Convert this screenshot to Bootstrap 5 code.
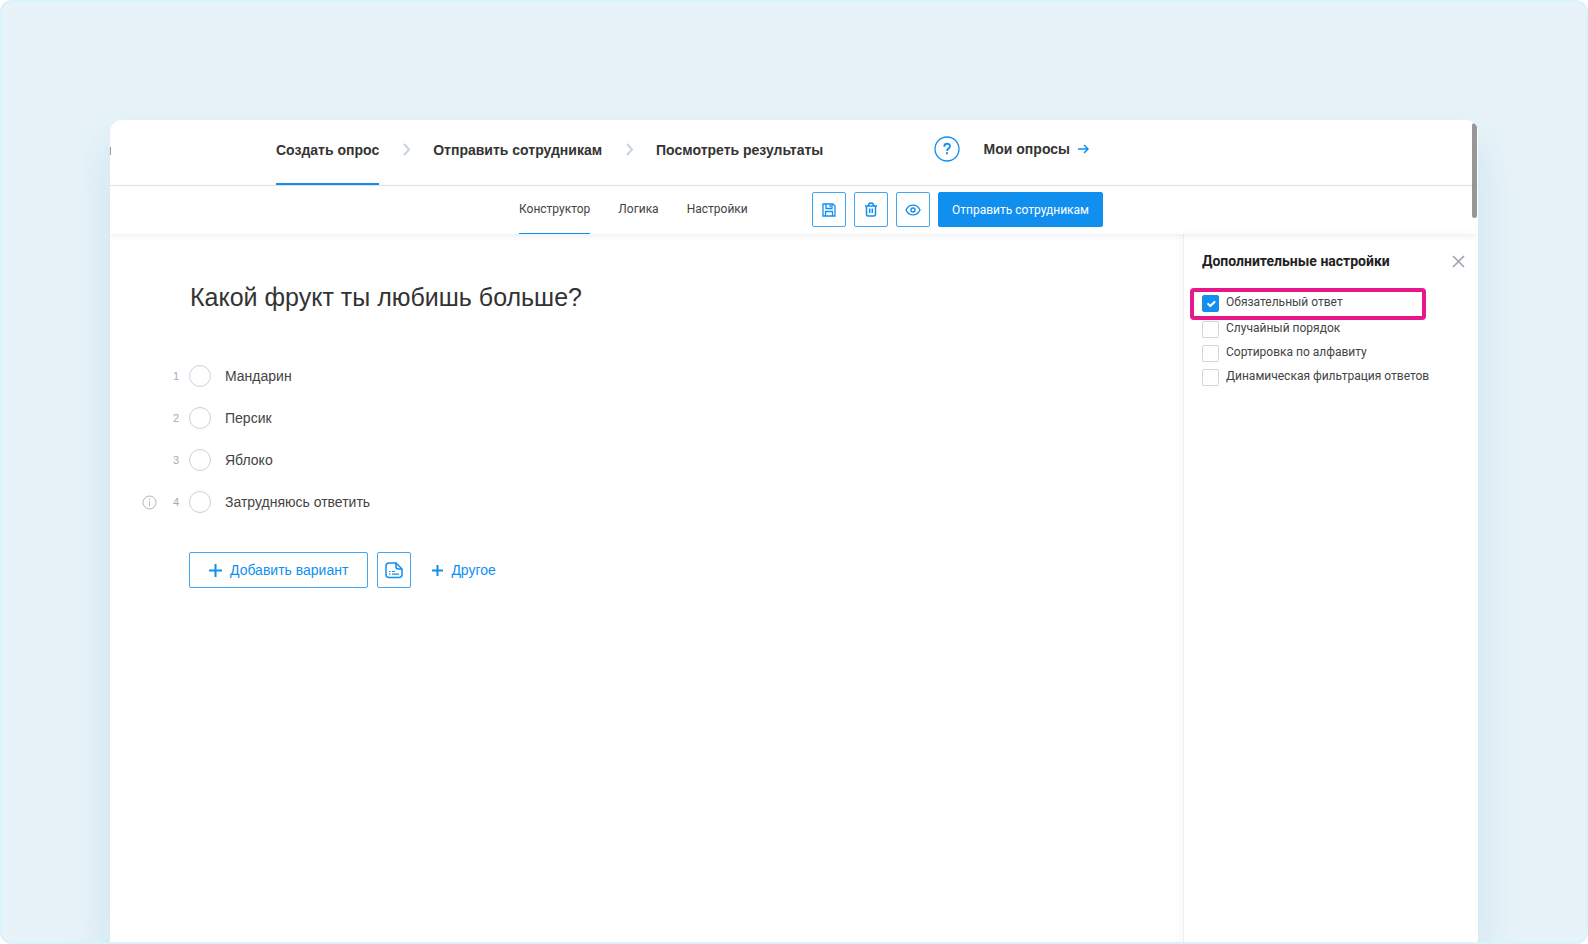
<!DOCTYPE html>
<html lang="ru">
<head>
<meta charset="utf-8">
<meta name="viewport" content="width=device-width, initial-scale=1">
<title>Конструктор опроса</title>
<link href="https://cdn.jsdelivr.net/npm/bootstrap@5.3.0/dist/css/bootstrap.min.css" rel="stylesheet">
<style>
:root { --accent: #118fef; --ink: #333; }
body { font-family: "Liberation Sans", Arial, sans-serif; font-size: 14px; line-height: 20px; color: var(--ink); background: #fff; }
a { text-decoration: none; color: inherit; }
svg { display: block; flex: none; }
.stage { border: 2px solid #daf2fa; border-radius: 12px; background: #e7f3f8; padding: 118px 108px 0; overflow: hidden; }
.app-window { background: #fff; border-radius: 12px 12px 0 0; box-shadow: 0 24px 44px rgba(90, 160, 205, .2); position: relative; overflow: hidden; }
.bar-inner { padding-left: 166px; padding-right: 375px; }
.steps-bar { height: 66px; border-bottom: 1px solid #e4e6e8; }
.step { font-weight: 700; height: 65px; padding-top: 20px; border-bottom: 2px solid transparent; }
.step.active { border-color: var(--accent); }
.chevron { margin: 23px 22px 0 24px; }
.help-zone { height: 58px; padding-right: 14px; }
.my-polls { font-weight: 700; }
.tools-bar { height: 48px; box-shadow: 0 2px 6px rgba(40, 50, 90, .08); position: relative; z-index: 1; }
.tabs { gap: 28px; margin-left: 243px; }
.tab { font-family: Roboto, sans-serif; font-size: 12px; color: #444; height: 48px; padding-top: 13px; border-bottom: 1px solid transparent; }
.tab.active { border-color: var(--accent); }
.tools { gap: 8px; padding-top: 6px; }
.btn-line { --bs-btn-color: var(--accent); --bs-btn-border-color: #44a6f3; --bs-btn-border-radius: 2px; --bs-btn-hover-color: #fff; --bs-btn-hover-bg: var(--accent); --bs-btn-font-size: 14px; --bs-btn-padding-y: 0; --bs-btn-padding-x: 19px; height: 36px; }
.btn-square { width: 34px; padding: 0; display: flex; align-items: center; justify-content: center; }
.tools .btn { height: 35px; }
.btn-send { --bs-btn-color: #fff; --bs-btn-bg: var(--accent); --bs-btn-border-color: var(--accent); --bs-btn-hover-color: #fff; --bs-btn-hover-bg: #0d7fd6; --bs-btn-border-radius: 2px; --bs-btn-font-size: 12px; --bs-btn-font-family: Roboto, sans-serif; --bs-btn-padding-y: 0; --bs-btn-padding-x: 13px; line-height: 20px; }
.work { min-height: 708px; }
.question { padding: 45px 24px 0 32px; }
.question h1 { font-size: 25px; line-height: 36px; font-weight: 400; margin: 0 0 50px 48px; }
.option-row { height: 22px; color: #444; }
.options { gap: 20px; }
.info-slot { width: 20px; }
.num { width: 27px; padding-right: 10px; text-align: right; font-size: 11px; color: #a4aaae; }
.option-row .form-check-input { width: 22px; height: 22px; margin: 0 14px 0 0; border: 1px solid #ccd1d3; flex: none; }
.actions { margin: 39px 0 0 47px; gap: 9px; }
.btn-other { --bs-btn-font-size: 14px; --bs-btn-color: var(--accent); border: 0; }
.side { width: 295px; border-left: 1px solid #eceef1; box-shadow: -4px 0 8px rgba(40, 50, 90, .03); padding: 17px 13px 0 18px; font-family: Roboto, sans-serif; font-size: 12px; }
.side h2 { font-size: 14px; line-height: 20px; font-weight: 700; color: #222; margin: 0; }
.btn-x { border: 0; background: none; padding: 0; color: #9aa3ad; }
.checks { margin-top: 17px; }
.check { height: 24px; padding: 0; }
.check .form-check-input { width: 17px; height: 17px; margin: 2px 7px 0 0; border: 1px solid #d0d7da; border-radius: 2px; flex: none; background-size: 14px; }
.check .form-check-input:checked { background-color: var(--accent); border-color: var(--accent); }
.check label { line-height: 18px; color: #444; }
.check.marked { height: 32px; width: 236px; border: 4px solid #e9168a; border-radius: 4px; padding: 1px 0 0 8px; margin: 0 0 -1px -12px; }
.thumb { position: absolute; z-index: 2; top: 3px; right: 1px; width: 5px; height: 95px; border-radius: 3px; background: #979797; }
.clip { position: absolute; left: 0; top: 27px; width: 1px; height: 8px; background: #999; }
</style>
</head>
<body>
<div class="stage">
  <div class="app-window">
    <span class="clip"></span><span class="thumb"></span>
    <header class="steps-bar">
      <div class="bar-inner d-flex">
        <nav class="d-flex" aria-label="Шаги">
          <a href="#" class="step active">Создать опрос</a>
          <svg class="chevron" width="8" height="13" fill="none" stroke="#c5d2df" stroke-width="2"><path d="M1 1l5 5.500-5 5.500"/></svg>
          <a href="#" class="step">Отправить сотрудникам</a>
          <svg class="chevron" width="8" height="13" fill="none" stroke="#c5d2df" stroke-width="2"><path d="M1 1l5 5.500-5 5.500"/></svg>
          <a href="#" class="step">Посмотреть результаты</a>
        </nav>
        <div class="ms-auto d-flex align-items-center help-zone">
          <a href="#" aria-label="Помощь" class="me-4"><svg width="26" height="26" fill="none" stroke="#118fef"><circle cx="13" cy="13" r="12" stroke-width="1.300"/><path d="M10.300 10.800c0-4 5.600-4 5.600-.5 0 2.200-2.800 2.200-2.800 4.700" stroke-width="1.900"/><path d="M13 16.300v2" stroke-width="2"/></svg></a>
          <a href="#" class="my-polls d-flex align-items-center gap-2">Мои опросы <svg width="11" height="10" fill="none" stroke="#118fef" stroke-width="1.500"><path d="M0 5h10M6 1l4 4-4 4"/></svg></a>
        </div>
      </div>
    </header>
    <div class="tools-bar">
      <div class="bar-inner d-flex">
        <nav class="tabs d-flex" aria-label="Разделы">
          <a href="#" class="tab active">Конструктор</a>
          <a href="#" class="tab">Логика</a>
          <a href="#" class="tab">Настройки</a>
        </nav>
        <div class="tools ms-auto d-flex">
          <button type="button" class="btn btn-line btn-square" aria-label="Сохранить"><svg width="14" height="14" fill="none" stroke="#118fef" stroke-width="1.300"><path d="M1 1h10l2 2v10H1zM4 1v4.500h6V1M3.500 13V8.500h7V13M8.200 2v2"/></svg></button>
          <button type="button" class="btn btn-line btn-square" aria-label="Удалить"><svg width="14" height="15" fill="none" stroke="#118fef" stroke-width="1.500"><path d="M1 4h12M4.500 3.500q0-2.500 2.500-2.500t2.500 2.500M2.500 4v8.500q0 1.500 1.500 1.500h6q1.500 0 1.500-1.500V4M5.700 6.500v4.500M8.300 6.500v4.500"/></svg></button>
          <button type="button" class="btn btn-line btn-square" aria-label="Просмотр"><svg width="16" height="12" fill="none" stroke="#118fef" stroke-width="1.400"><path d="M1 6c3-6.500 11-6.500 14 0-3 6.500-11 6.500-14 0z"/><circle cx="8" cy="6" r="2"/></svg></button>
          <button type="button" class="btn btn-send">Отправить сотрудникам</button>
        </div>
      </div>
    </div>
    <div class="work d-flex">
      <main class="question flex-grow-1">
        <h1>Какой фрукт ты любишь больше?</h1>
        <div class="options d-flex flex-column">
          <div class="option-row d-flex align-items-center"><span class="info-slot"></span><span class="num">1</span><input class="form-check-input" type="radio" name="fruit" id="o1"><label for="o1">Мандарин</label></div>
          <div class="option-row d-flex align-items-center"><span class="info-slot"></span><span class="num">2</span><input class="form-check-input" type="radio" name="fruit" id="o2"><label for="o2">Персик</label></div>
          <div class="option-row d-flex align-items-center"><span class="info-slot"></span><span class="num">3</span><input class="form-check-input" type="radio" name="fruit" id="o3"><label for="o3">Яблоко</label></div>
          <div class="option-row d-flex align-items-center"><span class="info-slot"><svg width="15" height="15" fill="none" stroke="#b4b9bd"><circle cx="7.500" cy="7.500" r="6.500"/><path d="M7.500 6.300v5M7.500 3.500v1.500"/></svg></span><span class="num">4</span><input class="form-check-input" type="radio" name="fruit" id="o4"><label for="o4">Затрудняюсь ответить</label></div>
        </div>
        <div class="actions d-flex">
          <button type="button" class="btn btn-line d-flex align-items-center"><svg class="me-2" width="13" height="13" stroke="#118fef" stroke-width="2"><path d="M6.500 0v13M0 6.500h13"/></svg>Добавить вариант</button>
          <button type="button" class="btn btn-line btn-square" aria-label="Вставить список"><svg width="18" height="17" fill="none" stroke="#118fef" stroke-width="1.500"><path d="M11 1H4Q1 1 1 4v8.500q0 3 3 3h10q3 0 3-3V7L11 1v3.500Q11 7 13.500 7H17"/><path d="M4 9.500h1.500M7 9.500h3M4 12.200h1.500M7 12.200h7" stroke-width="1.200"/></svg></button>
          <button type="button" class="btn btn-other d-flex align-items-center"><svg class="me-2" width="11" height="11" stroke="#118fef" stroke-width="2"><path d="M5.500 0v11M0 5.500h11"/></svg>Другое</button>
        </div>
      </main>
      <aside class="side flex-shrink-0">
        <div class="d-flex justify-content-between align-items-center">
          <h2>Дополнительные настройки</h2>
          <button type="button" class="btn-x" aria-label="Закрыть"><svg width="13" height="13" fill="none" stroke="currentColor" stroke-width="1.600"><path d="M1 1l11 11M12 1L1 12"/></svg></button>
        </div>
        <div class="checks">
          <div class="check marked d-flex"><input class="form-check-input" type="checkbox" id="c1" checked><label for="c1">Обязательный ответ</label></div>
          <div class="check d-flex"><input class="form-check-input" type="checkbox" id="c2"><label for="c2">Случайный порядок</label></div>
          <div class="check d-flex"><input class="form-check-input" type="checkbox" id="c3"><label for="c3">Сортировка по алфавиту</label></div>
          <div class="check d-flex"><input class="form-check-input" type="checkbox" id="c4"><label for="c4">Динамическая фильтрация ответов</label></div>
        </div>
      </aside>
    </div>
  </div>
</div>
<script src="https://cdn.jsdelivr.net/npm/bootstrap@5.3.0/dist/js/bootstrap.bundle.min.js"></script>
</body>
</html>
